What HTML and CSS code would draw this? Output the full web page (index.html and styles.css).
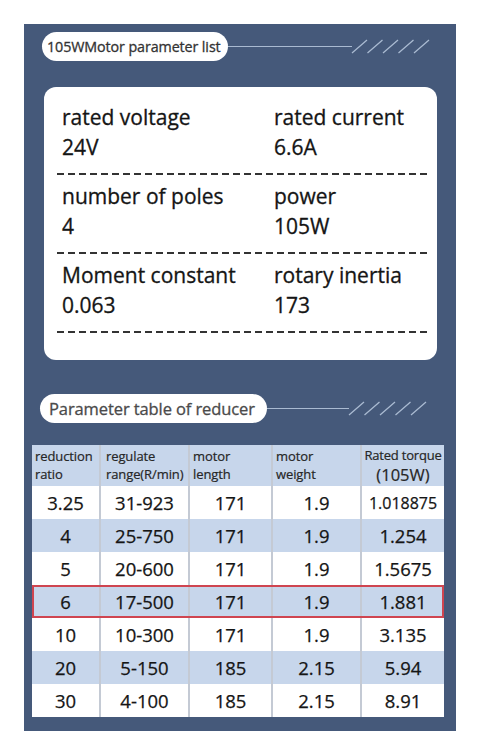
FILE: index.html
```html
<!DOCTYPE html>
<html lang="en">
<head>
<meta charset="utf-8">
<title>105W Motor parameters</title>
<link rel="stylesheet" href="styles.css">
</head>
<body>
<div class="page">
  <div class="panel">
    <div class="title-row t1">
      <div class="pill">105WMotor parameter list</div>
      <div class="rule"></div>
      <svg class="slashes" width="80" height="15" viewBox="0 0 80 15">
        <path d="M1 14 L16 1 M16.5 14 L31.5 1 M32 14 L47 1 M47.5 14 L62.5 1 M63 14 L78 1" stroke="#a9bad1" stroke-width="1.3" fill="none"/>
      </svg>
    </div>

    <div class="card">
      <div class="spec">
        <div class="item"><div>rated voltage</div><div>24V</div></div>
        <div class="item"><div>rated current</div><div>6.6A</div></div>
      </div>
      <div class="dash"></div>
      <div class="spec">
        <div class="item"><div>number of poles</div><div>4</div></div>
        <div class="item"><div>power</div><div>105W</div></div>
      </div>
      <div class="dash"></div>
      <div class="spec">
        <div class="item"><div>Moment constant</div><div>0.063</div></div>
        <div class="item"><div>rotary inertia</div><div>173</div></div>
      </div>
      <div class="dash"></div>
    </div>

    <div class="title-row t2">
      <div class="pill">Parameter table of reducer</div>
      <div class="rule"></div>
      <svg class="slashes" width="80" height="15" viewBox="0 0 80 15">
        <path d="M1 14 L16 1 M16.5 14 L31.5 1 M32 14 L47 1 M47.5 14 L62.5 1 M63 14 L78 1" stroke="#a9bad1" stroke-width="1.3" fill="none"/>
      </svg>
    </div>

    <div class="table">
      <div class="trow head">
        <div><span class="l1">reduction</span><span class="l2">ratio</span></div>
        <div class="c2"><span class="l1">regulate</span><span class="l2">range(R/min)</span></div>
        <div><span class="l1">motor</span><span class="l2">length</span></div>
        <div><span class="l1">motor</span><span class="l2">weight</span></div>
        <div class="torque"><span class="l1 small">Rated torque</span><span class="l2 big">(105W)</span></div>
      </div>
      <div class="trow"><div>3.25</div><div>31-923</div><div>171</div><div>1.9</div><div class="narrow">1.018875</div></div>
      <div class="trow blue"><div>4</div><div>25-750</div><div>171</div><div>1.9</div><div>1.254</div></div>
      <div class="trow"><div>5</div><div>20-600</div><div>171</div><div>1.9</div><div>1.5675</div></div>
      <div class="trow blue hl"><div>6</div><div>17-500</div><div>171</div><div>1.9</div><div>1.881</div></div>
      <div class="trow"><div>10</div><div>10-300</div><div>171</div><div>1.9</div><div>3.135</div></div>
      <div class="trow blue"><div>20</div><div>5-150</div><div>185</div><div>2.15</div><div>5.94</div></div>
      <div class="trow"><div>30</div><div>4-100</div><div>185</div><div>2.15</div><div>8.91</div></div>
    </div>
  </div>
</div>
</body>
</html>
```

FILE: styles.css
```css
* { box-sizing: border-box; }
html, body { margin: 0; padding: 0; background: #ffffff; }
body { font-family: "Open Sans", "Noto Sans", sans-serif; color: #222; }

.page { padding: 24px 24px 0 24px; }

.panel {
  width: 432px;
  background: #45597a;
  padding: 8px 0 14px 0;
}

.title-row {
  display: flex;
  align-items: center;
  height: 29px;
}
.t1 { padding-left: 18px; padding-right: 25px; }
.t2 { margin-top: 34px; padding-left: 16px; padding-right: 28px; }

.pill {
  height: 29px;
  background: #ffffff;
  border-radius: 15px;
  display: flex;
  align-items: center;
  white-space: nowrap;
  -webkit-text-stroke: 0.3px currentColor;
}
.t1 .pill { width: 186px; padding-left: 5px; font-size: 14.3px; letter-spacing: -0.1px; color: #333333; }
.t2 .pill { width: 227px; padding-left: 9px; font-size: 16.5px; letter-spacing: -0.1px; color: #4a4a4a; }

.rule { flex: 1; height: 1px; background: #a9bad1; }
.t1 .rule { margin-top: -1px; }
.slashes { display: block; flex: none; margin-left: -1px; }

.card {
  margin: 26px 19px 0 20px;
  background: #ffffff;
  border-radius: 12px;
  padding: 15px 9px 27px 13px;
}

.spec {
  display: grid;
  grid-template-columns: 212px 1fr;
  padding-left: 5px;
  font-size: 21px;
  line-height: 30px;
  color: #151515;
  -webkit-text-stroke: 0.3px currentColor;
}
.spec + .dash { margin-top: 11px; }
.dash + .spec { margin-top: 6px; }

.dash {
  height: 2px;
  background: repeating-linear-gradient(to right, #333333 0 7px, transparent 7px 11px);
}

.table {
  margin: 22px 12px 0 8px;
  width: 412px;
  background: #ffffff;
}

.trow {
  display: grid;
  grid-template-columns: 67px 89px 83px 89px 84px;
  height: 33px;
  background: #ffffff;
}
.trow.blue { background: #c7d6eb; }
.trow > div {
  display: flex;
  align-items: center;
  justify-content: center;
  border-left: 2px solid #c4cad4;
  font-size: 18.5px;
  color: #151515;
  white-space: nowrap;
  -webkit-text-stroke: 0.25px currentColor;
}
.trow > div:first-child { border-left: none; }
.trow > div.narrow { font-size: 16px; }

.trow.hl { outline: 2px solid #cf4550; outline-offset: -2px; }

.trow.head { height: 41px; background: #c7d6eb; }
.trow.head > div {
  display: flex;
  flex-direction: column;
  align-items: flex-start;
  justify-content: flex-start;
  font-size: 13px;
  line-height: normal;
  letter-spacing: -0.1px;
  padding: 2px 0 0 3px;
  color: #262626;
  -webkit-text-stroke: 0.2px currentColor;
}
.trow.head > div.c2 { padding-left: 5px; }
.head .l1, .head .l2 { display: block; }
.head .l2 { margin-top: -0.2px; }
.trow.head > div.torque {
  align-items: center;
  padding: 1px 0 0 0;
}
.torque .small { font-size: 13px; letter-spacing: -0.2px; }
.torque .big { font-size: 16.5px; letter-spacing: 0; margin-top: -1px; }
```
